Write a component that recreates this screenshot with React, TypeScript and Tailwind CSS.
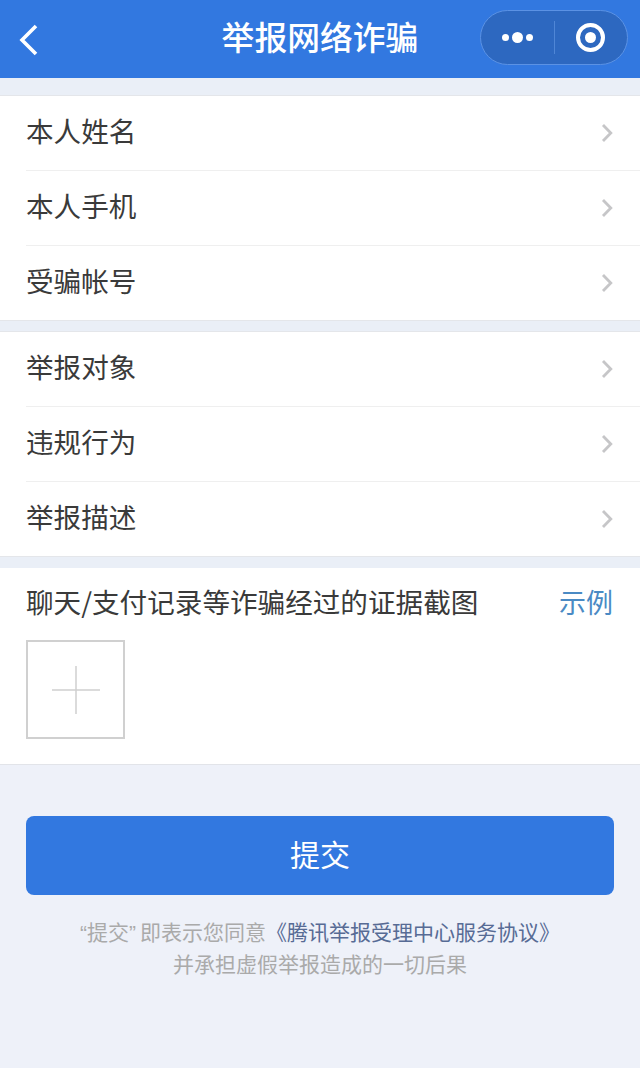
import React from 'react';

const font = { fontFamily: '"Noto Sans CJK SC", "Liberation Sans", sans-serif' };
const quote = { fontFamily: '"Liberation Sans", sans-serif' };

function Chevron() {
  return (
    <svg width="14" height="22" viewBox="0 0 14 22" fill="none" className="shrink-0">
      <path d="M3 3 L10.8 11 L3 19" stroke="#c6c6c8" strokeWidth="2.8" />
    </svg>
  );
}

function Row({ label, last }: { label: string; last?: boolean }) {
  return (
    <div className={`flex items-center pl-[26px] ${last ? 'h-[74px]' : 'h-[75px]'}`}>
      <div className={`flex h-full flex-1 items-center justify-between pr-[26px] ${last ? '' : 'border-b border-[#efefef]'}`}>
        <span className="pb-[5px] text-[27.6px] leading-none text-[#3a3a3a]">{label}</span>
        <Chevron />
      </div>
    </div>
  );
}

function Group({ items }: { items: string[] }) {
  return (
    <div className="border-y border-[#e4e6ea] bg-white">
      {items.map((item, i) => (
        <Row key={item} label={item} last={i === items.length - 1} />
      ))}
    </div>
  );
}

export default function App() {
  return (
    <div className="flex h-[1068px] w-[640px] flex-col overflow-hidden bg-[#eef1f9]" style={font}>
      {/* nav bar */}
      <div className="relative flex h-[78px] shrink-0 items-center justify-center bg-[#3278e0]">
        <svg width="24" height="34" viewBox="0 0 24 34" fill="none" className="absolute left-[17px] top-[23px]">
          <path d="M19 3 L5 17 L19 31" stroke="#ffffff" strokeWidth="3.6" />
        </svg>
        <span className="pb-[6px] text-[32.8px] font-medium leading-none text-white">举报网络诈骗</span>
        <div className="absolute left-[480px] top-[10px] flex h-[55px] w-[148px] items-center rounded-full border border-[#5b92e4] bg-[#2d68c0]">
          <div className="flex flex-1 items-center justify-center gap-[3px]">
            <span className="h-[7px] w-[7px] rounded-full bg-white" />
            <span className="h-[11px] w-[11px] rounded-full bg-white" />
            <span className="h-[7px] w-[7px] rounded-full bg-white" />
          </div>
          <div className="h-[33px] w-px bg-[#4f86d6]" />
          <div className="flex flex-1 items-center justify-center">
            <div className="flex h-[29px] w-[29px] items-center justify-center rounded-full border-[4px] border-white">
              <span className="h-[11px] w-[11px] rounded-full bg-white" />
            </div>
          </div>
        </div>
      </div>

      <div className="bg-[#eaeff7] pt-[17px]">
        <Group items={['本人姓名', '本人手机', '受骗帐号']} />
        <div className="mt-[10px]">
          <Group items={['举报对象', '违规行为', '举报描述']} />
        </div>

        {/* evidence upload */}
        <div className="mt-[11px] border-b border-[#e2e4e9] bg-white px-[26px] pb-[25px]">
          <div className="flex h-[72px] items-center justify-between">
            <span className="pb-[5px] text-[27.6px] leading-none text-[#3a3a3a]">聊天/支付记录等诈骗经过的证据截图</span>
            <span className="pb-[5px] pr-px text-[27px] leading-none text-[#4a8ac4]">示例</span>
          </div>
          <div className="flex h-[99px] w-[99px] items-center justify-center border-2 border-[#d0d0d0]">
            <svg width="50" height="50" viewBox="0 0 50 50" fill="none">
              <path d="M25 1 V49 M1 25 H49" stroke="#d0d0d0" strokeWidth="1.5" />
            </svg>
          </div>
        </div>
      </div>

      {/* submit */}
      <div className="mt-[51px] px-[26px]">
        <button className="flex h-[79px] w-full items-center justify-center rounded-[8px] bg-[#3278e0] pb-[5px] text-[30px] leading-none text-white">
          提交
        </button>
      </div>
      <div className="mt-[21px] text-center text-[21px] leading-[31px] text-[#aaaaaa]">
        <p>
          <span style={quote}>“</span>提交<span className="mr-[4px]" style={quote}>”</span>即表示您同意
          <span className="text-[#576b95]">《腾讯举报受理中心服务协议》</span>
        </p>
        <p>并承担虚假举报造成的一切后果</p>
      </div>
    </div>
  );
}
